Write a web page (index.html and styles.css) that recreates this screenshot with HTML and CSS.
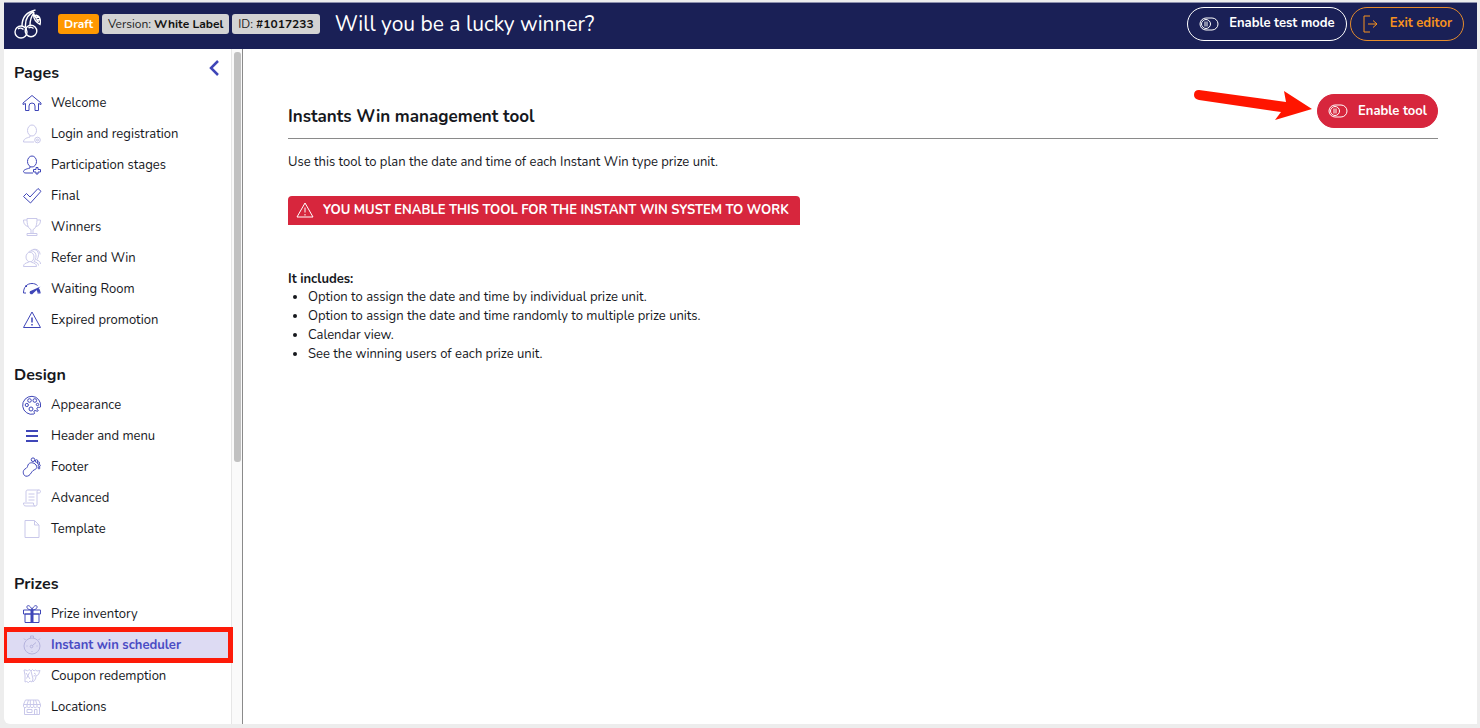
FILE: index.html
```html
<!DOCTYPE html>
<html lang="en">
<head>
<meta charset="utf-8">
<title>Will you be a lucky winner?</title>
<link rel="stylesheet" href="styles.css">
</head>
<body>
<div class="app">
  <header class="topbar">
    <svg class="logo" viewBox="0 0 28 32" aria-label="Cherries">
      <circle cx="8" cy="24" r="6"/><circle cx="18" cy="23" r="5.800"/>
      <path d="M5 21c1.500-1.500 4-1 5.500.5M15.500 20c1.500-1.500 4-.5 5 .5M9 18C9 10 13 4 22.500 2M12.500 19C12 12 15 6 21 3.500M17 17.500c0-5 1-9 4-12.500M21 4c-1 4 0 9 6 12.500C28 12 27 8 22.500 7M21 6.500c1.500 2 3 5 4.500 7.500M22 9.500l4-.5M23.500 12l3.500-.5"/>
    </svg>
    <span class="tag tag-draft">Draft</span>
    <span class="tag">Version: <b>White Label</b></span>
    <span class="tag">ID: <b>#1017233</b></span>
    <h1 class="title">Will you be a lucky winner?</h1>
    <div class="actions">
      <button class="pill" type="button"><svg class="toggle" viewBox="0 0 20 14"><rect x="1" y="1" width="18" height="12" rx="6"/><circle cx="7" cy="7" r="4.500"/><path d="M6 4.500v5M8 4.500v5"/></svg>Enable test mode</button>
      <button class="pill pill-exit" type="button"><svg class="exit" viewBox="0 0 18 20"><path d="M8 2H2v16h6M6 10h9M11 6.500l4 3.500-4 3.500"/></svg>Exit editor</button>
    </div>
  </header>
  <div class="body">
    <aside class="sidebar">
      <nav class="nav">
        <button class="collapse" type="button" aria-label="Collapse menu"><svg viewBox="0 0 12 18"><path d="M10 2L3 9l7 7"/></svg></button>
        <section class="group">
          <h2 class="group-title">Pages</h2>
          <ul class="items">
            <li><a class="item" href="#"><svg class="icon" viewBox="0 0 20 20"><path d="M3.500 10.500L1 11.500V10l9-7.500 9 7.500v1.500l-2.500-1v7H13v-4.500a3 3 0 0 0-6 0v4.500H3.500z"/></svg>Welcome</a></li>
            <li><a class="item" href="#"><svg class="icon off" viewBox="0 0 20 20"><ellipse cx="10" cy="6.500" rx="4.500" ry="5.500"/><path d="M8 11.500v1.500c-4 1-6.500 2-6.500 5H12"/><circle cx="15.500" cy="16" r="2.800"/><circle cx="15.500" cy="16" r="1"/></svg>Login and registration</a></li>
            <li><a class="item" href="#"><svg class="icon" viewBox="0 0 20 20"><ellipse cx="10" cy="6.500" rx="4.500" ry="5.500"/><path d="M8 11.500v1.500c-4 1-6.500 2-6.500 3.500 0 1 1 1.500 2.500 1.500h7M14 12.500h2v2h2.500v2.500H16v2h-2v-2h-2.500v-2.500H14z"/></svg>Participation stages</a></li>
            <li><a class="item" href="#"><svg class="icon" viewBox="0 0 20 20"><path d="M1.500 10.500L4.500 7.500l3.500 3.500 8-8.500 3 2.800L8.500 17z"/></svg>Final</a></li>
            <li><a class="item" href="#"><svg class="icon off" viewBox="0 0 20 20"><path d="M5 1.500h10c0 6-1 10-4 11v4H9v-4c-3-1-4-5-4-11zM5 3H1.500c0 3 1 5.500 4.500 6.500M15 3h3.500c0 3-1 5.500-4.500 6.500M5 16.500h10v2H5z"/></svg>Winners</a></li>
            <li><a class="item" href="#"><svg class="icon off" viewBox="0 0 20 20"><ellipse cx="8" cy="9" rx="4" ry="4.800"/><path d="M6.500 13.500v.8c-3 .8-5 1.500-5 4.200h13c0-2.700-2-3.400-5-4.200v-.8M6.500 4c3-2.500 7.500-.5 7.500 4 0 2-.7 4-2 5.500 3 1 4.500 2 4.500 4M9 2.500c4-2.500 7.500.5 7.500 4 0 2-.7 4-2 5.500 3 .8 4 2 4 4M11 1.500c4-1 7 1.500 7 5"/></svg>Refer and Win</a></li>
            <li><a class="item" href="#"><svg class="icon" viewBox="0 0 20 20"><path d="M1.500 14C1.500 8 5 4.500 10 4.500c2 0 4 .6 5.500 2M1.500 14H4M5 8l-1.500-1.500M18.500 14h-3"/><path class="solid" d="M18.500 7.500l-7.500 7a1.800 1.800 0 0 1-3-2.200zM16 8.500c1.500 1.300 2.500 3 2.500 5.500l-3-.5-1-3z"/></svg>Waiting Room</a></li>
            <li><a class="item" href="#"><svg class="icon" viewBox="0 0 20 20"><path d="M10 2L1.500 17.500h17z"/><path class="bold" d="M10 7.500v5M10 14v1.500"/></svg>Expired promotion</a></li>
          </ul>
        </section>
        <section class="group">
          <h2 class="group-title">Design</h2>
          <ul class="items">
            <li><a class="item" href="#"><svg class="icon" viewBox="0 0 20 20"><path d="M18.500 12A9 9 0 1 0 12 19c1.500-.5-.5-2 0-3 1-1.500 3 1 4 0s-2-1.500-1-3 2.500 0 3.500-1z"/><circle cx="7.500" cy="5.500" r="1.800"/><circle cx="12.800" cy="5.500" r="1.800"/><circle cx="4.800" cy="10" r="1.600"/><circle cx="9" cy="14" r="2"/><circle cx="15.500" cy="9.500" r="1.200"/></svg>Appearance</a></li>
            <li><a class="item" href="#"><svg class="icon" viewBox="0 0 20 20"><path class="bar" d="M4 5h12M4 10h12M4 15h12"/></svg>Header and menu</a></li>
            <li><a class="item" href="#"><svg class="icon" viewBox="0 0 20 20"><path d="M3 12c2-1 2.500-2 3-4 1-3 6-3 8 0s0 4-2 5-2 2-4 4.500c-1 1.500-4 2.500-5.500 1s-2-5 .5-6.500z"/><circle cx="11" cy="2.700" r="1.800"/><circle cx="14.500" cy="4" r="1.300"/><circle cx="16.500" cy="6" r="1.100"/><circle cx="17.300" cy="8.500" r="1"/><circle cx="17" cy="11" r=".9"/></svg>Footer</a></li>
            <li><a class="item" href="#"><svg class="icon off" viewBox="0 0 20 20"><path d="M4 14V4c0-1.500.5-2 2-2h11c2 0 2 3 0 3h-2v11c0 1.500-.5 2-2 2H4c-2 0-2.500-1-2.500-3h10c0 1.500 0 3 1.500 3M15 5V4c0-1 .5-2 1.500-2M6.500 6h6M6.500 9h6M6.500 12h6"/></svg>Advanced</a></li>
            <li><a class="item" href="#"><svg class="icon off" viewBox="0 0 20 20"><path d="M3 1.500h9.500L17 6v12.500H3zM12.500 1.500V6H17"/></svg>Template</a></li>
          </ul>
        </section>
        <section class="group">
          <h2 class="group-title">Prizes</h2>
          <ul class="items">
            <li><a class="item" href="#"><svg class="icon" viewBox="0 0 20 20"><path d="M1.500 6h17v4h-17zM3 10h14v8.500H3zM10 6C7 6 4.500 4.500 5 2.500S9 2 10 6c1-4 4.500-5.500 5-3.500S13 6 10 6z"/><path class="thick" d="M10 6v12.500"/></svg>Prize inventory</a></li>
            <li><a class="item active" href="#" aria-current="page"><svg class="icon off" viewBox="0 0 20 20"><circle cx="10" cy="11" r="8"/><path d="M8.500 3V1h3v2M3.500 5L2 3.500M16.500 5L18 3.500M10.500 10.500L14 7.500M4.500 11h1M14.500 11h1M10 16v1"/><circle cx="9.500" cy="11.500" r="1.300"/></svg>Instant win scheduler</a></li>
            <li><a class="item" href="#"><svg class="icon off" viewBox="0 0 20 20"><path d="M2 4h2l1.500 1L7 3.500 9 5l2 8-1 3-2-1-1.500 1.500-2-1L3 16V9zM9 5l1.500-1.500L12 5l1.500-1L15 5l3-.5-1.500 4L14 10l-.5 3-2.500 3M4 7l4 6M7.500 6.500l-3 6M12 7l2 1.500M11.500 10l2-.5"/></svg>Coupon redemption</a></li>
            <li><a class="item" href="#"><svg class="icon off" viewBox="0 0 20 20"><path d="M3.500 3h13l2 4.500v2c0 1.500-3 1.500-3.500 0-.5 1.500-3 1.500-3.300 0-.4 1.500-3 1.500-3.400 0C8 11 5.500 11 5 9.500c-.5 1.500-3.500 1.500-3.500 0v-2zM1.500 7.500h17M5 9.500V7.500L6.500 3M8.300 9.500V3M11.700 9.500V3M15 9.500V7.500L13.500 3M2.500 11v6.500h15V11M5 12.500h5v3H5zM12.500 17.500v-5H15v5"/></svg>Locations</a></li>
          </ul>
        </section>
      </nav>
      <div class="track"><div class="thumb"></div></div>
    </aside>
    <main class="content">
      <div class="content-head">
        <h2 class="heading">Instants Win management tool</h2>
        <button class="pill pill-danger" type="button"><svg class="toggle" viewBox="0 0 20 14"><rect x="1" y="1" width="18" height="12" rx="6"/><circle cx="7" cy="7" r="4.500"/><path d="M6 4.500v5M8 4.500v5"/></svg>Enable tool</button>
        <svg class="arrow" viewBox="0 0 120 32"><path d="M6 0Q1 0 1 5Q1 9 6 10L88 22L82 30L119 19L91 1L93 12Z"/></svg>
      </div>
      <p class="lead">Use this tool to plan the date and time of each Instant Win type prize unit.</p>
      <div class="alert"><svg class="warn" viewBox="0 0 20 20"><path d="M10 2L2 16h16zM10 6.500v5M10 13v1.500"/></svg>YOU MUST ENABLE THIS TOOL FOR THE INSTANT WIN SYSTEM TO WORK</div>
      <h3 class="sub">It includes:</h3>
      <ul class="list">
        <li>Option to assign the date and time by individual prize unit.</li>
        <li>Option to assign the date and time randomly to multiple prize units.</li>
        <li>Calendar view.</li>
        <li>See the winning users of each prize unit.</li>
      </ul>
    </main>
  </div>
</div>
</body>
</html>
```
FILE: styles.css
```css
* { box-sizing: border-box; }
body {
  margin: 0;
  background: #ededed;
  color: #16181d;
  font: 13px/19px Nunito, "Open Sans", sans-serif;
}
h1, h2, h3, p, ul { margin: 0; padding: 0; }
button { font: inherit; cursor: pointer; }
svg { fill: none; stroke: currentColor; flex: none; }
.app {
  display: flex;
  flex-direction: column;
  height: 100vh;
  padding: 2px 3px 4px 4px;
}
.topbar {
  display: flex;
  align-items: center;
  gap: 3px;
  height: 47px;
  padding: 0 13px 5px 9px;
  border-top: 1px solid #8d90ad;
  background: #1a2056;
  color: #fff;
}
.logo { width: 28px; height: 32px; margin-right: 14px; stroke-width: 1.4; }
.tag {
  padding: 0 6px;
  border-radius: 3px;
  background: #d3d3d3;
  color: #222;
  font-size: 12px;
  line-height: 20px;
  white-space: nowrap;
}
.tag b { color: #111; }
.tag-draft { background: #ff9800; color: #fff; font-weight: 700; }
.title { margin-left: 12px; font-size: 21px; font-weight: 400; line-height: 28px; white-space: nowrap; }
.actions { display: flex; gap: 3px; margin-left: auto; }
.pill {
  display: flex;
  align-items: center;
  gap: 10px;
  height: 34px;
  padding: 0 10px;
  border: 1px solid #fff;
  border-radius: 17px;
  background: transparent;
  color: #fff;
  font-weight: 700;
  white-space: nowrap;
}
.topbar .pill { padding: 0 11px; }
.pill-exit { border-color: #e58b2c; color: #f7921e; }
.pill-danger { border-color: #d7263d; background: #d7263d; }
.toggle { width: 20px; height: 14px; }
.exit { width: 18px; height: 20px; }
.body { display: flex; flex: 1; min-height: 0; background: #fff; border-bottom-left-radius: 6px; }
.sidebar {
  display: flex;
  flex: none;
  width: 239px;
  overflow: hidden;
  border-right: 1px solid #8a8a8a;
}
.nav {
  display: flex;
  position: relative;
  flex: 1;
  flex-direction: column;
  gap: 24px;
  padding-top: 9px;
}
.collapse {
  position: absolute;
  top: 10px;
  right: 11px;
  padding: 0;
  border: 0;
  background: none;
  color: #3f46b8;
}
.collapse svg { display: block; width: 12px; height: 18px; stroke-width: 2.5; }
.group-title { padding-left: 10px; font-size: 16px; font-weight: 700; line-height: 30px; }
.items { list-style: none; }
.item {
  display: flex;
  position: relative;
  align-items: center;
  gap: 9px;
  padding-left: 18px;
  color: inherit;
  line-height: 31px;
  text-decoration: none;
  white-space: nowrap;
}
.icon { width: 20px; height: 20px; margin-bottom: 2px; color: #3f46b8; }
.off { color: #c9c8ea; }
.active { background: #dddbf3; color: #4a4cc4; font-weight: 700; }
.active .off { color: #b5b3de; }
.active::after {
  content: "";
  position: absolute;
  inset: -3px -2px -2px 0;
  border: 5px solid #fd1a08;
  border-left-width: 3px;
  z-index: 1;
}
.bold { stroke-width: 1.5; }
.bar { stroke-width: 2; }
.thick { stroke-width: 3; }
.solid { fill: currentColor; stroke: none; }
.track { width: 11px; padding: 3px 1px 0 2px; border-left: 1px solid #e6e6e6; background: #fafafa; }
.thumb { height: 61%; border-radius: 3px; background: #c1c1c1; }
.content { flex: 1; min-width: 0; padding: 45px 39px 20px 45px; }
.content-head {
  display: flex;
  position: relative;
  align-items: flex-start;
  justify-content: space-between;
  height: 45px;
  border-bottom: 1px solid #8a8a8a;
}
.heading { padding-top: 11px; font-size: 17px; line-height: 24px; }
.arrow { position: absolute; top: -4px; right: 125px; width: 120px; height: 32px; fill: #ff1500; stroke: none; }
.lead { padding: 14px 0 24px; }
.alert {
  display: flex;
  align-items: center;
  gap: 8px;
  width: fit-content;
  padding: 0 11px 0 7px;
  border-radius: 4px 4px 0 0;
  background: #d7263d;
  color: #fff;
  font-weight: 700;
  line-height: 29px;
}
.warn { width: 20px; height: 20px; }
.sub { padding-top: 45px; font-size: 13px; line-height: 18px; }
.list { padding-left: 20px; }
```
